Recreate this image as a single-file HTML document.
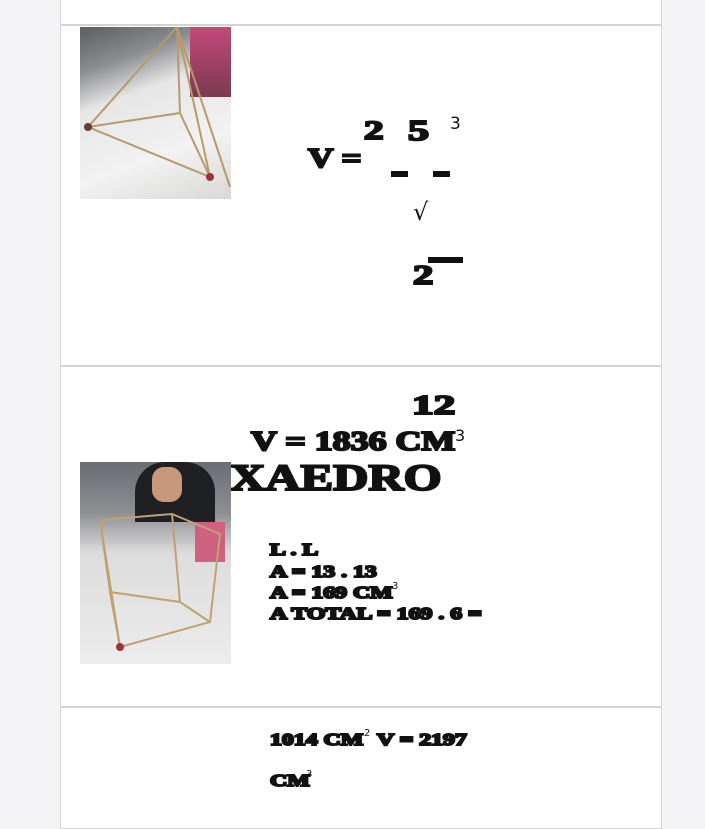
<!DOCTYPE html>
<html><head><meta charset="utf-8"><style>
body{margin:0;width:705px;height:802px;background:#f4f4f6;position:relative;overflow:hidden;font-family:"Liberation Serif",serif}
.sec{position:absolute;left:60px;width:600px;background:#fff;border:1px solid #d4d4d4}
.t{position:absolute;font-weight:bold;color:#111;-webkit-text-stroke:2px #111;white-space:nowrap;line-height:1;transform-origin:left top;transform:scaleX(1.4)}
.s{position:absolute;font-family:"DejaVu Sans",sans-serif;color:#111;font-weight:normal}
.bar{position:absolute;background:#111}
.photo{position:absolute;overflow:hidden}
</style></head><body>
<div class="sec" style="top:-2px;height:25px"></div>
<div class="sec" style="top:25px;height:339px"></div>
<div class="sec" style="top:366px;height:339px"></div>
<div class="sec" style="top:707px;height:120px"></div>

<div class="photo" style="left:80px;top:27px;width:151px;height:172px;background:linear-gradient(160deg,#5d5e62 0%,#8a8b8f 20%,#e6e6e6 38%,#f2f2f2 70%,#d8d8d6 100%)">
<div style="position:absolute;left:110px;top:0;width:41px;height:70px;background:linear-gradient(#c44a7a,#7b3a50)"></div>
<svg width="151" height="172" style="position:absolute;left:0;top:0"><g stroke="#b89a6a" stroke-width="2" fill="none"><path d="M97 0 L8 100 L130 150 L97 0 L100 86 L8 100 M100 86 L130 150 M97 0 L150 160"/></g><circle cx="8" cy="100" r="4" fill="#6a3a3a"/><circle cx="130" cy="150" r="4" fill="#a03040"/></svg>
</div>

<div class="t" style="left:308px;top:145px;font-size:27px;transform:scaleX(1.3)">V =</div>
<div class="t" style="left:364px;top:118px;font-size:26px;transform:scaleX(1.5)">2</div>
<div class="t" style="left:408px;top:118px;font-size:28px;transform:scaleX(1.5)">5</div>
<div class="s" style="left:450px;top:114px;font-size:17px">3</div>
<div class="bar" style="left:391px;top:171px;width:17px;height:6px"></div>
<div class="bar" style="left:433px;top:171px;width:17px;height:6px"></div>
<div class="s" style="left:413px;top:198px;font-size:24px">√</div>
<div class="t" style="left:413px;top:262px;font-size:27px;transform:scaleX(1.5)">2</div>
<div class="bar" style="left:428px;top:257px;width:35px;height:6px"></div>

<div class="t" style="left:412px;top:392px;font-size:27px;transform:scaleX(1.6)">12</div>
<div class="t" style="left:251px;top:428px;font-size:27px;transform:scaleX(1.33)">V = 1836 CM</div>
<div class="s" style="left:455px;top:426px;font-size:16px">3</div>
<div class="t" style="left:230px;top:460px;font-size:37px;transform:scaleX(1.32)">XAEDRO</div>

<div class="photo" style="left:80px;top:462px;width:151px;height:202px;background:linear-gradient(180deg,#6c6d72 0%,#8d8e92 25%,#dcdcdc 45%,#ececec 100%)">
<div style="position:absolute;left:55px;top:0;width:80px;height:60px;background:#1f2024;border-radius:30px 30px 0 0"></div>
<div style="position:absolute;left:72px;top:5px;width:30px;height:35px;background:#c9987a;border-radius:12px"></div>
<div style="position:absolute;left:115px;top:60px;width:30px;height:40px;background:#d06080"></div>
<svg width="151" height="202" style="position:absolute;left:0;top:0"><g stroke="#c2a070" stroke-width="2" fill="none"><path d="M20 58 L92 52 L140 72 L130 160 L40 185 L20 58 M92 52 L100 140 L130 160 M100 140 L30 130 L40 185 M20 58 L30 130"/></g><circle cx="40" cy="185" r="4" fill="#a03040"/></svg>
</div>

<div class="t" style="left:270px;top:541px;font-size:17px">L . L</div>
<div class="t" style="left:270px;top:563px;font-size:17px">A = 13 . 13</div>
<div class="t" style="left:270px;top:584px;font-size:17px">A = 169 CM</div>
<div class="s" style="left:392px;top:581px;font-size:10px">3</div>
<div class="t" style="left:270px;top:605px;font-size:17px">A TOTAL = 169 . 6 =</div>

<div class="t" style="left:270px;top:731px;font-size:17px">1014 CM</div>
<div class="s" style="left:364px;top:728px;font-size:10px">2</div>
<div class="t" style="left:377px;top:731px;font-size:17px">V = 2197</div>
<div class="t" style="left:270px;top:772px;font-size:17px">CM</div>
<div class="s" style="left:306px;top:769px;font-size:10px">3</div>
</body></html>
